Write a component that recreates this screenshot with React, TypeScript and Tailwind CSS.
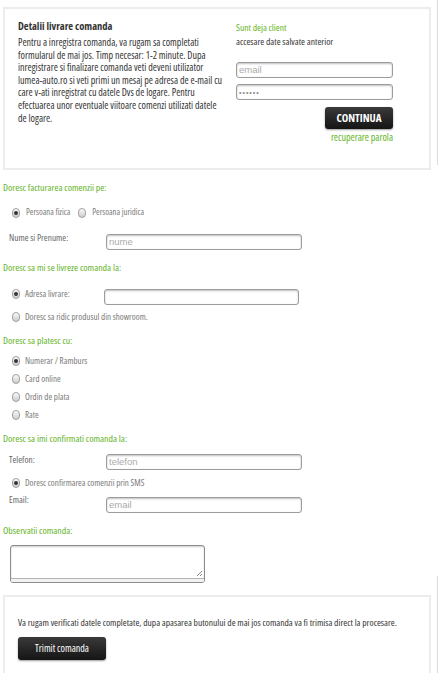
import React from "react";

const N = "font-['Open_Sans',sans-serif] font-stretch-[75%]";
const GREEN = "text-[#5fb41e]";
const LBL = `${N} text-[9px] text-[#7a7a7a]`;
const FLBL = `${N} text-[9.3px] text-[#666]`;

function Radio({ checked }: { checked?: boolean }) {
  return (
    <span className="flex h-[10px] w-[8px] shrink-0 items-center justify-center rounded-full border border-[#a0a0a0] bg-gradient-to-b from-[#fafafa] to-[#cdcdcd]">
      {checked && <span className="h-[4px] w-[4px] rounded-full bg-[#333]" />}
    </span>
  );
}

function Field({ w, placeholder, pw }: { w: string; placeholder?: string; pw?: boolean }) {
  return (
    <div
      className={`flex h-[16px] ${w} items-center rounded-[3px] border border-[#9c9c9c] bg-white pl-[2px] shadow-[inset_0_1px_2px_rgba(0,0,0,0.25)]`}
    >
      <span
        className={`font-['Liberation_Sans',Arial,sans-serif] leading-none ${
          pw ? "text-[7px] tracking-[1px] text-[#888]" : "text-[9.5px] text-[#aaa]"
        }`}
      >
        {placeholder}
      </span>
    </div>
  );
}

function Heading({ children, mt }: { children: React.ReactNode; mt: string }) {
  return <div className={`${mt} flex h-[16px] items-center ${N} text-[9.8px] ${GREEN}`}>{children}</div>;
}

function RadioRow({ checked, label, mt, h = "h-[16px]" }: { checked?: boolean; label: string; mt: string; h?: string }) {
  return (
    <div className={`${mt} ${h} flex items-center pl-[9px]`}>
      <Radio checked={checked} />
      <span className={`ml-[5px] ${LBL}`}>{label}</span>
    </div>
  );
}

export default function App() {
  return (
    <div className="relative h-[673px] w-[438px] overflow-hidden bg-white text-[#333]">
      {/* top section */}
      <div className="flex">
        <div className="ml-[3px] mt-[7px] flex h-[163px] w-[428px] border-2 border-[#ececec] pl-[13px] pt-[10px]">
          <div className={`w-[206px] ${N}`}>
            <div className="text-[10.5px] font-bold leading-[15px] text-[#333]">Detalii livrare comanda</div>
            <p className="mt-[2px] text-[10px] leading-[12.6px] text-[#333]">
              Pentru a inregistra comanda, va rugam sa completati formularul de mai jos. Timp necesar: 1-2 minute. Dupa
              inregistrare si finalizare comanda veti deveni utilizator lumea-auto.ro si veti primi un mesaj pe adresa de
              e-mail cu care v-ati inregistrat cu datele Dvs de logare. Pentru efectuarea unor eventuale viitoare comenzi
              utilizati datele de logare.
            </p>
          </div>
          <div className="ml-[12px] mt-[2px] flex w-[157px] flex-col">
            <div className={`${N} text-[9.5px] leading-[14px] ${GREEN}`}>Sunt deja client</div>
            <div className={`${N} text-[9.5px] leading-[14px] text-[#333]`}>accesare date salvate anterior</div>
            <div className="mt-[13px]">
              <Field w="w-[157px]" placeholder="email" />
            </div>
            <div className="mt-[6px]">
              <Field w="w-[157px]" placeholder="••••••" pw />
            </div>
            <div className="mt-[7px] flex justify-end">
              <div
                className={`flex h-[22px] w-[68px] items-center justify-center rounded-[3px] bg-gradient-to-b from-[#3a3a3a] to-[#151515] ${N} text-[11px] font-bold text-white shadow-[0_1px_2px_rgba(0,0,0,0.4)]`}
              >
                CONTINUA
              </div>
            </div>
            <div className={`mt-[1px] text-right ${N} text-[10px] leading-[14px] ${GREEN}`}>recuperare parola</div>
          </div>
        </div>
        <div className="flex-1" />
        <div className="h-[165px] w-px bg-[#dcdcdc]" />
      </div>

      {/* form */}
      <div className="pl-[3px]">
        <Heading mt="mt-[10px]">Doresc facturarea comenzii pe:</Heading>
        <div className="mt-[9px] flex h-[16px] items-center pl-[9px]">
          <Radio checked />
          <span className={`ml-[6px] ${N} text-[8.7px] text-[#7a7a7a]`}>Persoana fizica</span>
          <span className="ml-[8px]">
            <Radio />
          </span>
          <span className={`ml-[6px] ${N} text-[8.7px] text-[#7a7a7a]`}>Persoana juridica</span>
        </div>
        <div className="mt-[13px] flex h-[16px] items-start">
          <span className={`ml-[6px] mt-[-3px] w-[97px] ${FLBL}`}>Nume si Prenume:</span>
          <Field w="w-[196px]" placeholder="nume" />
        </div>

        <Heading mt="mt-[10px]">Doresc sa mi se livreze comanda la:</Heading>
        <div className="mt-[13px] flex h-[16px] items-start">
          <div className="flex h-[10px] w-[101px] items-center pl-[9px]">
            <Radio checked />
            <span className={`ml-[5px] ${LBL}`}>Adresa livrare:</span>
          </div>
          <Field w="w-[195px]" />
        </div>
        <RadioRow mt="mt-[4px]" label="Doresc sa ridic produsul din showroom." />

        <Heading mt="mt-[8px]">Doresc sa platesc cu:</Heading>
        <RadioRow mt="mt-[3px]" h="h-[18px]" checked label="Numerar / Ramburs" />
        <RadioRow mt="mt-0" h="h-[18px]" label="Card online" />
        <RadioRow mt="mt-0" h="h-[18px]" label="Ordin de plata" />
        <RadioRow mt="mt-0" h="h-[18px]" label="Rate" />

        <Heading mt="mt-[7px]">Doresc sa imi confirmati comanda la:</Heading>
        <div className="mt-[7px] flex h-[16px] items-start">
          <span className={`ml-[6px] mt-[-1px] w-[97px] ${FLBL}`}>Telefon:</span>
          <Field w="w-[196px]" placeholder="telefon" />
        </div>
        <RadioRow mt="mt-[5px]" checked label="Doresc confirmarea comenzii prin SMS" />
        <div className="mt-[6px] flex h-[16px] items-start">
          <span className={`ml-[6px] mt-[-4px] w-[97px] ${FLBL}`}>Email:</span>
          <Field w="w-[196px]" placeholder="email" />
        </div>

        <Heading mt="mt-[10px]">Observatii comanda:</Heading>
        <div className="ml-[7px] mt-[6px] flex h-[38px] w-[195px] flex-col overflow-hidden rounded-[3px] border border-[#8c8c8c] bg-white">
          <div className="relative flex-1 shadow-[inset_0_1px_2px_rgba(0,0,0,0.2)]">
            <svg className="absolute bottom-[1px] right-[1px]" width="7" height="7" viewBox="0 0 7 7">
              <path d="M6 1 L1 6 M6 4 L4 6" stroke="#888" strokeWidth="1" />
            </svg>
          </div>
          <div className="h-[4px] border-t border-[#b5b5b5] bg-[#f2f2f2]" />
        </div>
      </div>

      {/* bottom section */}
      <div className="flex">
        <div className="ml-[3px] mt-[12px] h-[90px] w-[428px] border-2 border-[#ececec] pl-[13px] pt-[19px]">
          <div className={`${N} whitespace-nowrap text-[9.5px] leading-[14px] text-[#333]`}>
            Va rugam verificati datele completate, dupa apasarea butonului de mai jos comanda va fi trimisa direct la procesare.
          </div>
          <div
            className={`mt-[7px] flex h-[23px] w-[88px] items-center justify-center rounded-[3px] bg-gradient-to-b from-[#3a3a3a] to-[#151515] font-['Open_Sans',sans-serif] font-stretch-[87.5%] text-[10px] text-white shadow-[0_1px_2px_rgba(0,0,0,0.4)]`}
          >
            Trimit comanda
          </div>
        </div>
        <div className="flex-1" />
        <div className="mt-[-7px] h-[100px] w-px bg-[#dcdcdc]" />
      </div>
    </div>
  );
}
